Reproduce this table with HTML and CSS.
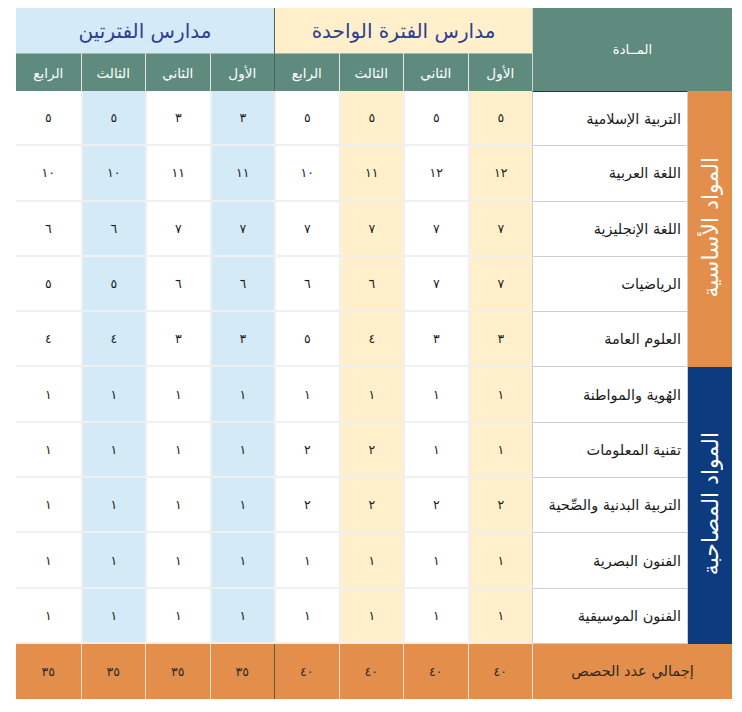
FILE: index.html
```html
<!DOCTYPE html>
<html lang="ar" dir="rtl">
<head>
<meta charset="utf-8">
<title>توزيع الحصص</title>
<link rel="stylesheet" href="styles.css">
</head>
<body>
<div class="page">
<table class="plan">
  <colgroup>
    <col class="c-cat"><col class="c-subj">
    <col><col><col><col><col><col><col><col>
  </colgroup>
  <thead>
    <tr class="r-group">
      <th class="h-subj" rowspan="2" colspan="2">المــادة</th>
      <th class="h-group g-one" colspan="4">مدارس الفترة الواحدة</th>
      <th class="h-group g-two" colspan="4">مدارس الفترتين</th>
    </tr>
    <tr class="r-grade">
      <th>الأول</th><th>الثاني</th><th>الثالث</th><th class="end">الرابع</th>
      <th>الأول</th><th>الثاني</th><th>الثالث</th><th>الرابع</th>
    </tr>
  </thead>
  <tbody>
    <tr>
      <td class="cat basic" rowspan="5"><span>المواد الأساسية</span></td>
      <td class="subj">التربية الإسلامية</td>
      <td class="y">٥</td><td>٥</td><td class="y">٥</td><td>٥</td>
      <td class="b">٣</td><td>٣</td><td class="b">٥</td><td>٥</td>
    </tr>
    <tr>
      <td class="subj">اللغة العربية</td>
      <td class="y">١٢</td><td>١٢</td><td class="y">١١</td><td>١٠</td>
      <td class="b">١١</td><td>١١</td><td class="b">١٠</td><td>١٠</td>
    </tr>
    <tr>
      <td class="subj">اللغة الإنجليزية</td>
      <td class="y">٧</td><td>٧</td><td class="y">٧</td><td>٧</td>
      <td class="b">٧</td><td>٧</td><td class="b">٦</td><td>٦</td>
    </tr>
    <tr>
      <td class="subj">الرياضيات</td>
      <td class="y">٧</td><td>٧</td><td class="y">٦</td><td>٦</td>
      <td class="b">٦</td><td>٦</td><td class="b">٥</td><td>٥</td>
    </tr>
    <tr>
      <td class="subj">العلوم العامة</td>
      <td class="y">٣</td><td>٣</td><td class="y">٤</td><td>٥</td>
      <td class="b">٣</td><td>٣</td><td class="b">٤</td><td>٤</td>
    </tr>
    <tr>
      <td class="cat extra" rowspan="5"><span>المواد المصاحبة</span></td>
      <td class="subj">الهُوية والمواطنة</td>
      <td class="y">١</td><td>١</td><td class="y">١</td><td>١</td>
      <td class="b">١</td><td>١</td><td class="b">١</td><td>١</td>
    </tr>
    <tr>
      <td class="subj">تقنية المعلومات</td>
      <td class="y">١</td><td>١</td><td class="y">٢</td><td>٢</td>
      <td class="b">١</td><td>١</td><td class="b">١</td><td>١</td>
    </tr>
    <tr>
      <td class="subj">التربية البدنية والصِّحية</td>
      <td class="y">٢</td><td>٢</td><td class="y">٢</td><td>٢</td>
      <td class="b">١</td><td>١</td><td class="b">١</td><td>١</td>
    </tr>
    <tr>
      <td class="subj">الفنون البصرية</td>
      <td class="y">١</td><td>١</td><td class="y">١</td><td>١</td>
      <td class="b">١</td><td>١</td><td class="b">١</td><td>١</td>
    </tr>
    <tr>
      <td class="subj">الفنون الموسيقية</td>
      <td class="y">١</td><td>١</td><td class="y">١</td><td>١</td>
      <td class="b">١</td><td>١</td><td class="b">١</td><td>١</td>
    </tr>
  </tbody>
  <tfoot>
    <tr class="r-total">
      <td class="t-label" colspan="2">إجمالي عدد الحصص</td>
      <td>٤٠</td><td>٤٠</td><td>٤٠</td><td class="end">٤٠</td>
      <td>٣٥</td><td>٣٥</td><td>٣٥</td><td>٣٥</td>
    </tr>
  </tfoot>
</table>
</div>
</body>
</html>
```

FILE: styles.css
```css
html, body {
  margin: 0;
  padding: 0;
  background: #ffffff;
}

body {
  font-family: "DejaVu Sans", "Noto Sans", sans-serif;
  color: #1f1f1f;
}

.page {
  padding: 8px 10px 0 16px;
}

.plan {
  width: 716px;
  table-layout: fixed;
  border-collapse: separate;
  border-spacing: 0;
  direction: rtl;
}

.c-cat { width: 44px; }
.c-subj { width: 156px; }

.plan th,
.plan td {
  padding: 0;
  text-align: center;
  vertical-align: middle;
}

/* header rows */
.r-group { height: 45px; }

.h-subj {
  background: #5e8b7e;
  color: #ffffff;
  font-weight: normal;
  font-size: 13px;
  padding-top: 8px;
  border-left: 1px solid #c9d9d2;
}

.h-group {
  font-weight: normal;
  font-size: 20px;
  color: #2e3f93;
}

.g-one {
  background: #fff0cb;
  border-left: 1px solid #46685a;
}

.g-two {
  background: #d5eaf7;
}

.r-grade { height: 38px; }

.r-grade th {
  background: #5e8b7e;
  color: #ffffff;
  font-size: 13.5px;
  font-weight: normal;
  border-left: 1px solid #dfe9e4;
  border-top: 1px solid #9fbcb1;
}

.r-grade th:last-child {
  border-left: none;
}

.r-grade th.end {
  border-left: 1px solid #46685a;
}

/* body */
.plan tbody tr { height: 55.3px; }

.plan tbody td {
  font-size: 12.5px;
  color: #1c1c1c;
  background: #ffffff;
  border-bottom: 2px solid #f0f0f0;
  border-left: 2px solid #f0f0f0;
}

.plan tbody td:last-child {
  border-left: none;
}

.plan tbody td.y { background: #fff0cb; }
.plan tbody td.b { background: #d5eaf7; }

.plan tbody td.subj {
  text-align: right;
  padding-right: 6px;
  font-size: 14.5px;
  color: #1a1a1a;
  border-bottom: 1px solid #cfcfcf;
  border-left: 1px solid #cfcfcf;
  border-right: 1px solid #cfcfcf;
}

.plan tbody tr:first-child td.subj {
  border-top: 1px solid #333333;
}

.plan tbody td.cat {
  color: #ffffff;
  font-size: 22px;
  border: none;
  padding: 0;
}

.cat span {
  display: inline-block;
  writing-mode: vertical-rl;
  transform: rotate(180deg);
  white-space: nowrap;
}

.plan tbody td.basic { background: #e38e4b; }
.plan tbody td.extra { background: #0d3b80; }

/* total */
.r-total { height: 55px; }

.r-total td {
  background: #e38e4b;
  font-size: 12.5px;
  color: #2a2a2a;
  border-left: 1px solid #f6e2d2;
}

.r-total td:last-child { border-left: none; }

.r-total td.end {
  border-left: 1px solid #5a5a46;
}

.r-total td.t-label {
  font-size: 14.5px;
  border-left: 1px solid #f6e2d2;
}
```
